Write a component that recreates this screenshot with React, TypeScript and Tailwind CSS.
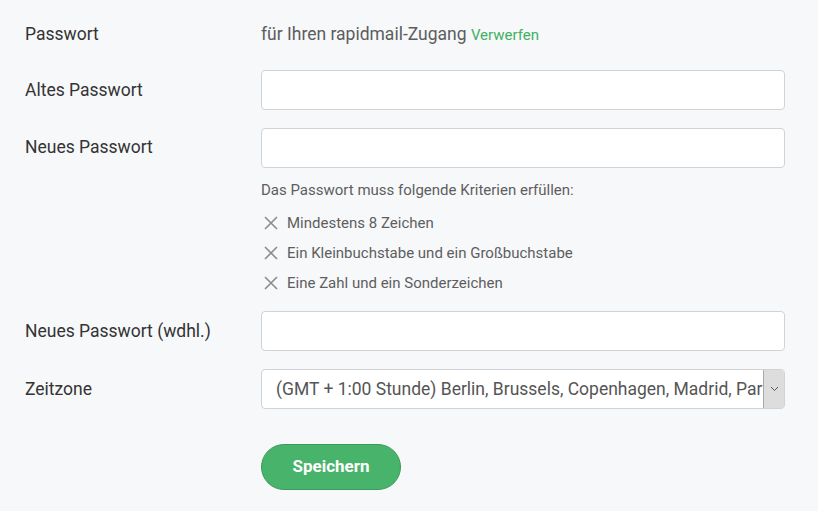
import React from "react";

const XIcon = () => (
  <svg width="16" height="16" viewBox="0 0 16 16" className="shrink-0">
    <path d="M2 2 L14 14 M14 2 L2 14" stroke="#8c8c8c" strokeWidth="1.6" fill="none" />
  </svg>
);

export default function App() {
  const label = "w-[236px] shrink-0 text-[17.5px] text-[#333333]";
  const input =
    "w-[524px] h-[40px] bg-white border border-[#cfd3d8] rounded-[4px]";
  return (
    <div
      className="min-h-[511px] w-[818px] bg-[#f7f8fa] pl-[25px] pt-[14px]"
      style={{ fontFamily: "Roboto, 'Noto Sans', sans-serif" }}
    >
      <div className="flex items-center h-[40px]">
        <div className={label}>Passwort</div>
        <div className="text-[17.5px] text-[#5c5c5c]">
          für Ihren rapidmail-Zugang{" "}
          <span className="text-[15px] text-[#3fb064]">Verwerfen</span>
        </div>
      </div>

      <div className="flex items-center mt-[16px]">
        <div className={label}>Altes Passwort</div>
        <div className={input} />
      </div>

      <div className="flex mt-[18px]">
        <div className={label + " leading-[38px]"}>Neues Passwort</div>
        <div className="flex flex-col">
          <div className={input} />
          <div className="text-[15px] text-[#5e5e5e] mt-[12px] leading-[20px]">
            Das Passwort muss folgende Kriterien erfüllen:
          </div>
          <div className="flex flex-col gap-[10px] mt-[13px] text-[15px] text-[#5e5e5e] leading-[20px]">
            <div className="flex items-center gap-[8px] pl-[2px]">
              <XIcon />
              <span>Mindestens 8 Zeichen</span>
            </div>
            <div className="flex items-center gap-[8px] pl-[2px]">
              <XIcon />
              <span>Ein Kleinbuchstabe und ein Großbuchstabe</span>
            </div>
            <div className="flex items-center gap-[8px] pl-[2px]">
              <XIcon />
              <span>Eine Zahl und ein Sonderzeichen</span>
            </div>
          </div>
        </div>
      </div>

      <div className="flex items-center mt-[18px]">
        <div className={label}>Neues Passwort (wdhl.)</div>
        <div className={input} />
      </div>

      <div className="flex items-center mt-[18px]">
        <div className={label}>Zeitzone</div>
        <div className={input + " flex items-stretch overflow-hidden"}>
          <div className="flex-1 overflow-hidden whitespace-nowrap pl-[14px] text-[17.5px] text-[#555555] leading-[38px]">
            (GMT + 1:00 Stunde) Berlin, Brussels, Copenhagen, Madrid, Paris
          </div>
          <div className="w-[21px] bg-[#dddddd] border-l border-[#a9a9a9] flex items-center justify-center">
            <svg width="9" height="6" viewBox="0 0 9 6">
              <path d="M1 1 L4.5 4.5 L8 1" stroke="#555" strokeWidth="1" fill="none" />
            </svg>
          </div>
        </div>
      </div>

      <div className="flex mt-[35px]">
        <div className="w-[236px] shrink-0" />
        <button className="w-[140px] h-[46px] rounded-full bg-[#48b36a] border border-[#3a9c58] text-white font-bold text-[17px]">
          Speichern
        </button>
      </div>
    </div>
  );
}
